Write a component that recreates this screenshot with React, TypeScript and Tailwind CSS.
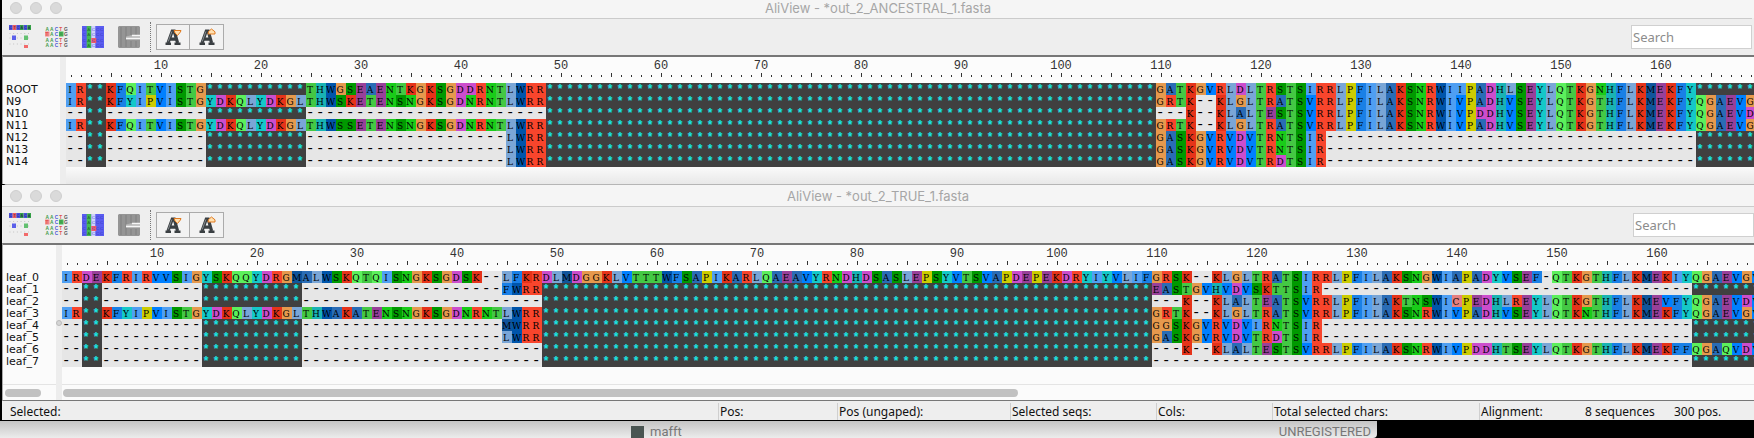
import React from "react";

const GAP = "-";
const fill = (c: string, n: number) => c.repeat(n);

const D10 = fill(GAP, 10);
const D20 = fill(GAP, 20);
const D24 = fill(GAP, 24);
const D37 = fill(GAP, 37);
const S10 = fill("*", 10);
const S61 = fill("*", 61);

type Sequence = { name: string; residues: string };

const ancestral: Sequence[] = [
  { name: "ROOT", residues: "IR**KFQITVISTG" + S10 + "THWGSEAENTKGKSGDDRNTLWRR" + S61 + "GATKGVRLDLTRSTSIRRLPFILAKSNRWIIPADHLSEYLQTKGNHFLKMEKFY******" },
  { name: "N9", residues: "IR**KFYIPVISTGYDKQLYDKGLTHWSKETENSNGKSGDNRNTLWRR" + S61 + "GRTK--KLGLTRATSVRRLPFILAKSNRWIVPADHVSEYLQTKGTHFLKMEKFYQGAEVG" },
  { name: "N10", residues: "--**" + D10 + S10 + D24 + S61 + "---K--KLALTESTSVRRLPFILAKSNRWIVPDDHVSEYLQTKGTHFLKMEKFYQGAEVD" },
  { name: "N11", residues: "IR**KFQITVISTGYDKQLYDKGLTHWSSETENSNGKSGDNRNTLWRR" + S61 + "GRTK--KLGLTRATSVRRLPFILAKSNRWIVPADHVSEYLQTKGTHFLKMEKFYQGAEVG" },
  { name: "N12", residues: "--**" + D10 + S10 + D20 + "LWRR" + S61 + "GASKGVRVDVTRNTSIR" + D37 + "******" },
  { name: "N13", residues: "--**" + D10 + S10 + D20 + "LWRR" + S61 + "GASKGVRVDVTRNTSIR" + D37 + "******" },
  { name: "N14", residues: "--**" + D10 + S10 + D20 + "LWRR" + S61 + "GASKGVRVDVTRDTSIR" + D37 + "******" },
];

const leaves: Sequence[] = [
  {
    name: "leaf_0",
    residues:
      "IRDEKFRIRVVSIGYSKQQYDRGMALWSKQTQISNGKSGDSK--LFKR" +
      "DLMDGGKLVTTTWFSAPIKARLQAEAVYRNDHDSASLEPSYVTSVAPDEPEKDRYIYVLIF" +
      "GRSK--KLGLTRATSIRRLPFILAKSNGWIAPADYVSEF-QTKGTHFLKMEKIYQGAEVGV",
  },
  { name: "leaf_1", residues: "--**" + D10 + S10 + D20 + "FWRR" + S61 + "EASTGVHVDVSKTTSIR" + D37 + "*******" },
  { name: "leaf_2", residues: "--**" + D10 + S10 + D24 + S61 + "---K--KLALTEATSVRRLPFILAKTNSWICPEDHLREYLQTKGTHFLKMEVFYQGAEVDV" },
  { name: "leaf_3", residues: "IR**KFYIPVISTGYDKQLYDKGLTHWAKATENSNGKSGDNRNTLWRR" + S61 + "GRTK--KLGLTRATSVRRLPFILAKSNRWIVPADHVSEYLQTKNTHFLKMEKFYQGAEVGV" },
  { name: "leaf_4", residues: "--**" + D10 + S10 + D20 + "MWRR" + S61 + "GGSKGVRVDVIRNTSIR" + D37 + "*******" },
  { name: "leaf_5", residues: "--**" + D10 + S10 + D20 + "LWRR" + S61 + "GASKGVRVDVTRDTSIR" + D37 + "*******" },
  { name: "leaf_6", residues: "--**" + D10 + S10 + D24 + S61 + "---K--KLALTESTSVRRLPFILAKSNRWIVPDDHTSEYLQTKGTHFLKMEKFFQGAQVDV" },
  { name: "leaf_7", residues: "--**" + D10 + S10 + D24 + S61 + D37 + fill(GAP, 17) + "*******" },
];

const residueStyle: Record<string, string> = {
  "-": "bg-[#e6e6e6] font-['Liberation_Mono',monospace] text-[14px] leading-[12px]",
  "*": "bg-[#404040] text-[#19e6e6] font-['Liberation_Mono',monospace] text-[12px] leading-[14px] font-bold",
  A: "bg-[#2a6cb5]",
  C: "bg-[#e67f7f]",
  D: "bg-[#cc4dcc]",
  E: "bg-[#994099]",
  F: "bg-[#1980e6]",
  G: "bg-[#e6994d]",
  H: "bg-[#19b3b3]",
  I: "bg-[#4f9ff2]",
  K: "bg-[#e63319]",
  L: "bg-[#7aa6d6]",
  M: "bg-[#10559b]",
  N: "bg-[#19cc19]",
  P: "bg-[#cccc00]",
  Q: "bg-[#5cf05c]",
  R: "bg-[#f8452c]",
  S: "bg-[#009900]",
  T: "bg-[#44c844]",
  V: "bg-[#0080ff]",
  W: "bg-[#0055aa]",
  Y: "bg-[#15c8c8]",
};

function Ruler({ length }: { length: number }) {
  return (
    <div className="flex h-[26px] font-['Liberation_Mono',monospace] text-[12px] leading-[18px] text-[#333]">
      {Array.from({ length }, (_, i) => i + 1).map((n) => (
        <div key={n} className="flex w-[10px] shrink-0 flex-col items-center justify-between">
          <span className="h-[14px] whitespace-nowrap">{n % 10 === 0 ? n : ""}</span>
          <span className={n % 5 === 0 ? "mb-[6px] h-[4px] w-px bg-[#333]" : "mb-[6px] h-[2px] w-px bg-[#333]"} />
        </div>
      ))}
    </div>
  );
}

function Residues({ sequences }: { sequences: Sequence[] }) {
  return (
    <div className="font-['DejaVu_Serif',serif] text-[9px] leading-[14px] text-black">
      {sequences.map((s) => (
        <div key={s.name} className="flex h-[12px]">
          {s.residues.split("").map((c, i) => (
            <span key={i} className={`w-[10px] shrink-0 pr-[2px] text-center ${residueStyle[c]}`}>
              {c}
            </span>
          ))}
        </div>
      ))}
    </div>
  );
}

function TitleBar({ title }: { title: string }) {
  return (
    <header className="flex h-full items-center bg-[#f5f5f5]">
      <div className="flex w-[80px] gap-[8px] pl-[8px]">
        {["Close", "Minimize", "Zoom"].map((l) => (
          <button key={l} aria-label={l} className="size-[12px] rounded-full border border-[#cfcfcf] bg-[#dadada]" />
        ))}
      </div>
      <h1 className="grow pr-[80px] text-center font-['Inter',sans-serif] text-[13px] leading-[16px] text-[#a6a6a6]">{title}</h1>
    </header>
  );
}

const letterColor: Record<string, string> = { A: "#3f9a4a", C: "#4a56d8", T: "#e05050", G: "#555555" };

function DifferenceIcon() {
  const row = ["C", "T", "C", "A", "C", "A"];
  const tone: Record<string, string> = { C: "#4a50e0", T: "#f05a5a", A: "#35a045" };
  return (
    <svg width="22" height="24" viewBox="0 0 22 24" aria-hidden="true">
      {row.map((c, i) => (
        <g key={i}>
          <rect x={i * 3.66} y="0" width="3.7" height="5" fill={tone[c]} />
          <text x={i * 3.66 + 0.5} y="4" fontSize="3.6" fill="#1c2160" fontFamily="Liberation Sans">{c}</text>
        </g>
      ))}
      {[8.5, 13, 19].map((y) => (
        <path key={y} d={`M0.5 ${y}H22`} stroke="#b5b5b5" strokeWidth="0.8" strokeDasharray="0.9 2.8" />
      ))}
      <rect x="3" y="10.5" width="4" height="4.5" fill="#5b60ea" />
      <rect x="15" y="10.5" width="4" height="4.5" fill="#62c070" />
      <rect x="15" y="20" width="4" height="3" fill="#f26a6a" />
    </svg>
  );
}

function LettersIcon() {
  const rows = ["AACTG", "TACAG", "AACTG", "AACTG"];
  return (
    <svg width="23" height="23" viewBox="0 0 23 23" aria-hidden="true">
      <rect x="0" y="5.5" width="4.5" height="5" fill="#f28a8a" />
      <rect x="14" y="5.5" width="4.5" height="5" fill="#46b556" />
      {rows.map((r, y) =>
        r.split("").map((c, x) => (
          <text key={`${x}-${y}`} x={x * 4.6 + 0.5} y={y * 5.6 + 4.6} fontSize="4.8" fontWeight="bold" fill={letterColor[c]} fontFamily="Liberation Sans">
            {c}
          </text>
        )),
      )}
    </svg>
  );
}

function MajorityIcon() {
  return (
    <svg width="22" height="22" viewBox="0 0 22 22" aria-hidden="true">
      <rect width="22" height="22" fill="#5a5cf0" />
      <rect x="4.7" width="4.6" height="22" fill="#45b955" />
      <rect x="9.3" width="4" height="22" fill="#cfd2fa" />
      <rect x="9.3" y="12" width="5" height="5" fill="#ef5a68" />
      {[4.5, 10, 15.5, 21].map((y) => (
        <g key={y} fontSize="4.4" fontFamily="Liberation Sans">
          <text x="0.6" y={y} fill="#383ac0">C</text>
          <text x="5.2" y={y} fill="#1d6f2c">A</text>
          <text x="9.8" y={y} fill="#4a50d8">C</text>
          <text x="14" y={y} fill="#383ac0">C</text>
          <text x="18" y={y} fill="#383ac0">C</text>
        </g>
      ))}
    </svg>
  );
}

function GapsIcon() {
  return (
    <svg width="22" height="22" viewBox="0 0 22 22" aria-hidden="true">
      <path d="M1 0H21L22 1V21L21 22H1L0 21V1Z" fill="#959595" />
      <path d="M3 1V21M8 1V21M13 1V9M13 15V21M18 1V9M18 15V21" stroke="#868686" strokeWidth="1.5" />
      <path d="M8 10.5L14 9H22V13.5H8Z" fill="#b4b4b4" />
      <path d="M14 9.5H22M8 12.5H22" stroke="#f6f6f6" strokeWidth="1.4" />
    </svg>
  );
}

function FontIcon({ grow }: { grow: boolean }) {
  return (
    <svg width="20" height="20" viewBox="0 0 20 20" fill="none" aria-hidden="true">
      <path d="M5 16L9.3 4H11.2L14.6 16M6.5 12.2H14" stroke="#3a3f42" strokeWidth="3.2" />
      <path d="M2.5 16.8H8M11.5 16.8H17.5" stroke="#3a3f42" strokeWidth="2.4" />
      <path d="M5.2 14.5L8.9 4.5" stroke="#8b9296" strokeWidth="0.9" />
      {grow ? (
        <path d="M11 7H18V4.8L14.5 2L11.5 4.5Z" fill="#ffe0b0" stroke="#e07a20" />
      ) : (
        <path d="M11 3.5H18L17.4 5L14.5 8.5L12 6Z" fill="#ffe0b0" stroke="#e07a20" />
      )}
    </svg>
  );
}

function Toolbar({ id }: { id: string }) {
  return (
    <div className="flex h-[37px] items-center border-t border-[#cbcbcb] bg-[#eeeeee] pl-[7px]">
      <div className="flex items-center gap-[14px]">
        <button aria-label="Show differences"><DifferenceIcon /></button>
        <button aria-label="Show letters"><LettersIcon /></button>
        <button aria-label="Show majority"><MajorityIcon /></button>
        <button aria-label="Show gaps"><GapsIcon /></button>
      </div>
      <div className="ml-[10px] h-[30px] border-l border-dotted border-[#777]" />
      <div className="ml-[5px] flex">
        <button aria-label="Decrease font size" className="flex h-[26px] w-[34px] items-center justify-center border border-[#ababab] bg-[#f2f2f2]">
          <FontIcon grow={false} />
        </button>
        <button aria-label="Increase font size" className="flex h-[26px] w-[34px] items-center justify-center border border-l-0 border-[#ababab] bg-[#f2f2f2]">
          <FontIcon grow />
        </button>
      </div>
      <label htmlFor={id} className="sr-only">Search</label>
      <input
        id={id}
        type="text"
        placeholder="Search"
        className="ml-auto h-[24px] w-[121px] rounded-none border border-[#d0d0d0] bg-white px-px font-['Noto_Sans',sans-serif] text-[13px] placeholder:text-[#8c8c8c]"
      />
    </div>
  );
}

function Names({ sequences }: { sequences: Sequence[] }) {
  return (
    <ul className="pt-[27px] pl-[3px] font-['DejaVu_Sans',sans-serif] text-[11px] leading-[12px] text-[#111]">
      {sequences.map((s) => (
        <li key={s.name}>{s.name}</li>
      ))}
    </ul>
  );
}

function Status({ className, children }: { className: string; children: React.ReactNode }) {
  return <div className={`shrink-0 border-l border-[#cfcfcf] pl-px ${className}`}>{children}</div>;
}

export default function App() {
  return (
    <main className="overflow-hidden bg-black">
      <section className="ml-[2px] bg-[#fafafa]">
        <div className="h-[18px] bg-[#f5f5f5] pb-[2px]">
          <TitleBar title="AliView - *out_2_ANCESTRAL_1.fasta" />
        </div>
        <div className="bg-[#eeeeee] pr-[2px]">
          <Toolbar id="search-ancestral" />
        </div>
        <div className="flex h-[129px] border-t-2 border-l border-t-[#777] border-l-[#aaa]">
          <div className="w-[57px] shrink-0">
            <Names sequences={ancestral} />
          </div>
          <div className="w-[6px] shrink-0 bg-[#ededed]" />
          <div className="min-w-0 grow overflow-hidden bg-[#fcfcfc]">
            <Ruler length={169} />
            <Residues sequences={ancestral} />
            <div className="h-[17px] bg-linear-to-b from-[#fafafa] to-[#e8e8e8]" />
          </div>
        </div>
      </section>

      <section className="ml-[2px] rounded-tl-[5px] border-t border-[#b5b5b5] bg-[#f5f5f5]">
        <div className="h-[21px]">
          <TitleBar title="AliView - *out_2_TRUE_1.fasta" />
        </div>
        <Toolbar id="search-true" />
        <div className="flex h-[158px] border-t-2 border-b border-l border-y-[#777] border-l-[#aaa] bg-[#fbfbfb]">
          <div className="flex w-[53px] shrink-0 flex-col justify-between">
            <Names sequences={leaves} />
            <div className="border-t border-[#e4e4e4] px-[2px] pt-[4px] pb-[3px]">
              <div className="h-[8px] w-[36px] rounded-full bg-[#c1c1c1]" />
            </div>
          </div>
          <div className="flex w-[6px] shrink-0 items-center bg-[#ededed]">
            <div className="size-[6px] rounded-full border border-[#bbb] bg-[#d5d5d5]" />
          </div>
          <div className="flex min-w-0 grow flex-col justify-between overflow-hidden">
            <div>
              <Ruler length={169} />
              <Residues sequences={leaves} />
            </div>
            <div className="border-t border-[#e4e4e4] px-px pt-[4px] pb-[3px]">
              <div className="h-[8px] w-[56.5%] rounded-full bg-[#c1c1c1]" />
            </div>
          </div>
        </div>
        <footer className="flex h-[19px] items-end bg-[#eeeeee] font-['Noto_Sans',sans-serif] text-[12px] leading-[17px] text-[#111]">
          <div className="grow pl-[8px]">Selected:</div>
          <Status className="w-[119px]">Pos:</Status>
          <Status className="w-[173px]">Pos (ungaped):</Status>
          <Status className="w-[146px]">Selected seqs:</Status>
          <Status className="w-[116px]">Cols:</Status>
          <Status className="w-[207px]">Total selected chars:</Status>
          <Status className="flex w-[275px]">
            <span className="w-[104px]">Alignment:</span>
            <span className="w-[89px]">8 sequences</span>
            <span>300 pos.</span>
          </Status>
        </footer>
      </section>

      <div className="flex h-[18px] border-t border-black">
        <div className="flex w-[1377px] items-end rounded-br-[4px] bg-linear-to-b from-[#c4c4c4] to-[#ececec] font-['Roboto',sans-serif] text-[13px] leading-[13px] text-[#777]">
          <span className="ml-[631px] h-[12px] w-[13px] bg-[#4a5552]" />
          <span className="ml-[6px]">mafft</span>
          <span className="ml-auto pr-[6px]">UNREGISTERED</span>
        </div>
      </div>
    </main>
  );
}
